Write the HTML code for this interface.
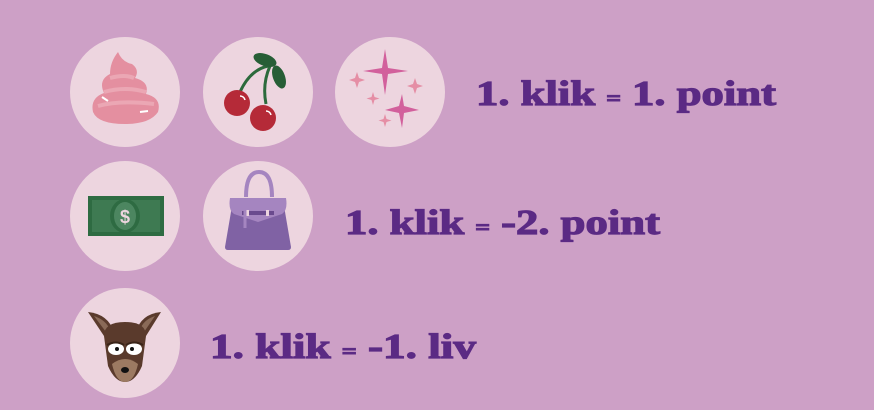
<!DOCTYPE html>
<html><head><style>
html,body{margin:0;padding:0;width:874px;height:410px;background:#CDA0C6;overflow:hidden}
</style></head><body>
<svg width="874" height="410" viewBox="0 0 874 410" xmlns="http://www.w3.org/2000/svg">
<rect width="874" height="410" fill="#CDA0C6"/>
<g fill="#EDD5DF">
<circle cx="125" cy="92" r="55"/><circle cx="258" cy="92" r="55"/><circle cx="390" cy="92" r="55"/>
<circle cx="125" cy="216" r="55"/><circle cx="258" cy="216" r="55"/>
<circle cx="125" cy="343" r="55"/>
</g>
<g>
<path d="M93 112 Q90 98 104 93 Q98 80 110 74 Q110 62 118 52 Q122 62 132 64 Q140 70 135 78 Q150 82 146 94 Q162 98 158 112 Q150 124 125 124 Q98 124 93 112Z" fill="#E48FA0"/>
<path d="M98 106 Q120 100 154 104 M104 92 Q125 86 146 92 M110 78 Q125 74 134 78" stroke="#EBA7B4" stroke-width="4" fill="none"/>
<path d="M102 97 l6 4 M140 112 l8 -1" stroke="#fff" stroke-width="2"/>
</g>
<g>
<path d="M240 92 Q250 70 268 66 M266 104 Q262 84 270 66" stroke="#2C6A3C" stroke-width="3" fill="none"/>
<ellipse cx="265" cy="60" rx="12" ry="6" transform="rotate(20 265 60)" fill="#275E36"/>
<ellipse cx="279" cy="77" rx="6" ry="12" transform="rotate(-20 279 77)" fill="#275E36"/>
<circle cx="237" cy="103" r="13" fill="#B52A38"/>
<circle cx="263" cy="118" r="13" fill="#B52A38"/>
<path d="M240 96 a5 5 0 0 1 5 4 M266 111 a5 5 0 0 1 5 4" stroke="#fff" stroke-width="1.5" fill="none"/>
</g>
<g fill="#D2609C">
<path d="M385 49 L388 68 L408 71 L388 74 L385 95 L382 74 L363 71 L382 68Z"/>
<path d="M402 94 L404 106 L419 110 L404 113 L402 128 L399 113 L385 110 L399 106Z"/>
</g>
<g fill="#E58EA5">
<path d="M357 72 l2 6 6 2 -6 2 -2 6 -2 -6 -6 -2 6 -2z"/>
<path d="M415 78 l2 6 6 2 -6 2 -2 6 -2 -6 -6 -2 6 -2z"/>
<path d="M373 92 l1.5 5 5 1.5 -5 1.5 -1.5 5 -1.5 -5 -5 -1.5 5 -1.5z"/>
<path d="M385 114 l1.5 5 5 1.5 -5 1.5 -1.5 5 -1.5 -5 -5 -1.5 5 -1.5z"/>
</g>
<rect x="88" y="196" width="76" height="40" fill="#2E6B42"/>
<rect x="92" y="200" width="68" height="32" fill="#3E7A52"/>
<ellipse cx="125" cy="216" rx="15" ry="17" fill="#2E6B42"/>
<ellipse cx="125" cy="216" rx="11" ry="14" fill="#4C8660"/>
<text x="125" y="223" text-anchor="middle" font-family="Liberation Sans" font-weight="bold" font-size="18" fill="#EDD5DF">$</text>
<path d="M246 197 Q246 172 259 172 Q272 172 272 197" stroke="#A585C0" stroke-width="4" fill="none"/>
<path d="M232 206 L284 206 L291 247 Q291 250 288 250 L228 250 Q225 250 225 247Z" fill="#8062A4"/>
<path d="M230 198 L286 198 Q288 210 282 214 L258 222 L234 214 Q228 210 230 198Z" fill="#A585C0"/>
<rect x="242" y="211" width="32" height="4" fill="#6A4A8E"/>
<rect x="246" y="210" width="3" height="6" fill="#EDD5DF"/><rect x="266" y="210" width="3" height="6" fill="#EDD5DF"/>
<path d="M245 200 L245 228" stroke="#A585C0" stroke-width="3"/>
<path d="M88 312 Q108 314 114 332 L104 336Z" fill="#5A3A2C"/>
<path d="M161 312 Q141 314 136 332 L146 336Z" fill="#5A3A2C"/>
<path d="M94 316 Q106 320 110 330 L106 332Z" fill="#8A6A58"/>
<path d="M155 316 Q143 320 140 330 L144 332Z" fill="#8A6A58"/>
<path d="M104 336 Q104 322 125 322 Q146 322 146 336 L142 366 Q135 382 125 382 Q115 382 108 366Z" fill="#5A3A2C"/>
<path d="M112 364 Q125 354 138 364 Q134 382 125 382 Q116 382 112 364Z" fill="#9C7A62"/>
<ellipse cx="116" cy="349" rx="8" ry="6" fill="#fff"/><ellipse cx="134" cy="349" rx="8" ry="6" fill="#fff"/>
<circle cx="117" cy="349" r="2" fill="#111"/><circle cx="132" cy="349" r="2" fill="#111"/>
<path d="M107 345 Q116 340 124 345 M126 345 Q134 340 143 345" stroke="#3A2418" stroke-width="2" fill="none"/>
<ellipse cx="125" cy="370" rx="4" ry="3" fill="#111"/>
<g font-family="Liberation Serif" font-weight="bold" fill="#5B2A84" stroke="#5B2A84" stroke-width="1.2" font-size="35">
<text x="476" y="105" textLength="300" lengthAdjust="spacingAndGlyphs">1. klik <tspan font-size="20">=</tspan> 1. point</text>
<text x="345" y="234" textLength="315" lengthAdjust="spacingAndGlyphs">1. klik <tspan font-size="20">=</tspan> -2. point</text>
<text x="210" y="358" textLength="266" lengthAdjust="spacingAndGlyphs">1. klik <tspan font-size="20">=</tspan> -1. liv</text>
</g>
</svg>
</body></html>
